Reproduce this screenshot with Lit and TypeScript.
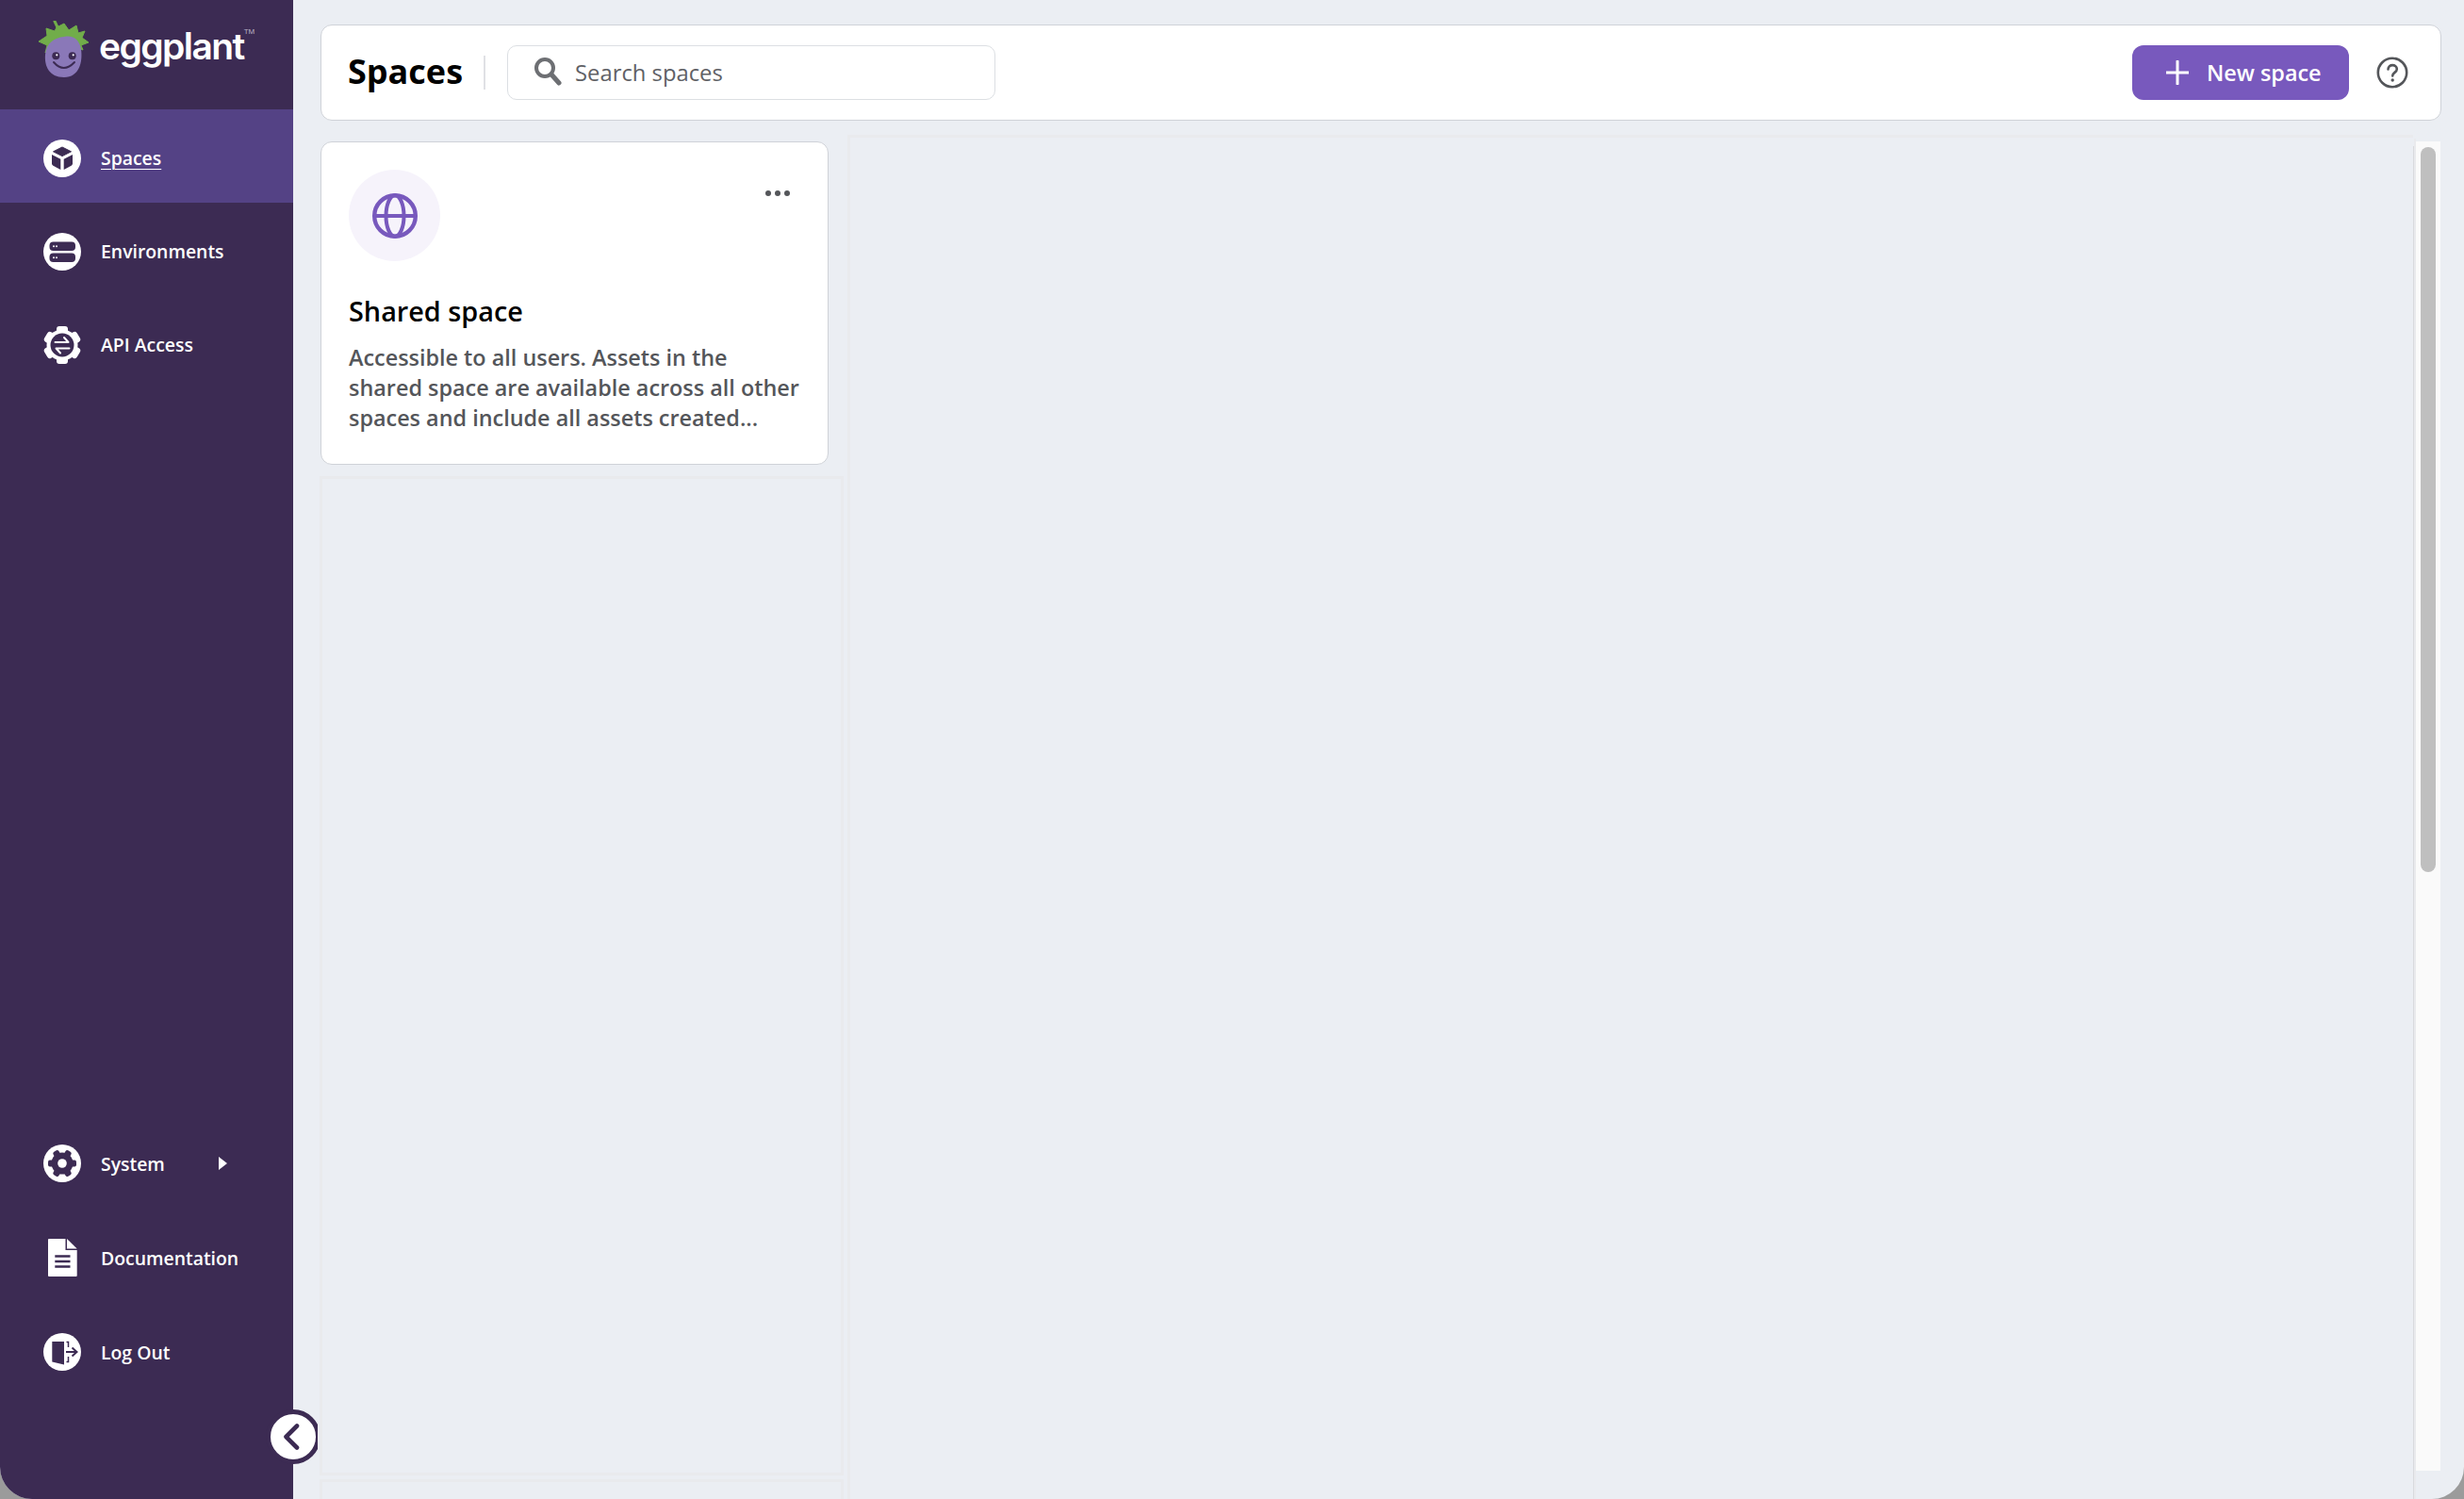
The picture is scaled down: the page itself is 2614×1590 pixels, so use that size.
import { LitElement, html, css, svg } from "lit";
import { customElement } from "lit/decorators.js";

const DARK = "#3c2b53";

const cubeIcon = svg`
  <circle cx="20" cy="20" r="20" fill="#fff" />
  <path d="M20 8 L29.5 12.8 L20 17.6 L10.5 12.8 Z" fill="${DARK}" stroke="${DARK}" stroke-width="1" stroke-linejoin="round" />
  <path d="M9 16 L18.3 20.8 V32 L10.4 27.8 Q9 27 9 25.6 Z" fill="${DARK}" />
  <path d="M31 16 L21.7 20.8 V32 L29.6 27.8 Q31 27 31 25.6 Z" fill="${DARK}" />`;

const serverIcon = svg`
  <circle cx="20" cy="20" r="20" fill="#fff" />
  <rect x="6.5" y="9.5" width="27.5" height="9.5" rx="4" fill="${DARK}" />
  <rect x="6.5" y="21.5" width="27.5" height="9.5" rx="4" fill="${DARK}" />
  <circle cx="11" cy="14.2" r="1" fill="#fff" /><circle cx="14" cy="14.2" r="1" fill="#fff" />
  <circle cx="11" cy="26.2" r="1" fill="#fff" /><circle cx="14" cy="26.2" r="1" fill="#fff" />`;

const gearTeeth = [0, 60, 120, 180, 240, 300].map(
  (a) => svg`<rect x="14" y="0" width="12" height="9" rx="3" fill="#fff" transform="rotate(${a} 20 20)" />`
);

const apiIcon = svg`
  ${gearTeeth}
  <circle cx="20" cy="20" r="16.5" fill="#fff" />
  <circle cx="20" cy="20" r="12.5" fill="${DARK}" />
  <path d="M12.5 17 H26.5 L22 12 M27.5 23.5 H13.5 L18 28.5" fill="none" stroke="#fff" stroke-width="2" stroke-linecap="round" stroke-linejoin="round" />`;

const systemIcon = svg`
  <circle cx="20" cy="20" r="20" fill="#fff" />
  <circle cx="20" cy="20" r="11.5" fill="${DARK}" />
  ${[30, 90, 150, 210, 270, 330].map(
    (a) => svg`<rect x="16.6" y="5" width="6.8" height="6" rx="2" fill="${DARK}" transform="rotate(${a} 20 20)" />`
  )}
  <circle cx="20" cy="20" r="4.8" fill="#fff" />`;

const docIcon = svg`
  <path d="M6 0 H23.5 V12 H35.7 V39 Q35.7 40 34.7 40 H6 Q5 40 5 39 V1 Q5 0 6 0 Z" fill="#fff" />
  <path d="M25 0 L35.7 10.5 H25 Z" fill="#fff" />
  <path d="M12.3 18.5 H28.5 M12.3 24 H28.5 M12.3 29.5 H28.5" stroke="${DARK}" stroke-width="2.6" />`;

const logoutIcon = svg`
  <circle cx="20" cy="20" r="20" fill="#fff" />
  <path d="M9.3 9 H22 V33.5 L9.3 30.5 Z" fill="${DARK}" />
  <path d="M24.5 9.5 H26.5 V15 M26.5 25 V30.5 H24.5" fill="none" stroke="${DARK}" stroke-width="1.5" />
  <path d="M24 20 H35 M30.5 15.5 L35.5 20 L30.5 24.5" fill="none" stroke="${DARK}" stroke-width="2" />`;

const navTop = [
  { label: "Spaces", icon: cubeIcon, active: true },
  { label: "Environments", icon: serverIcon },
  { label: "API Access", icon: apiIcon },
];

const navBottom = [
  { label: "System", icon: systemIcon, caret: true },
  { label: "Documentation", icon: docIcon },
  { label: "Log Out", icon: logoutIcon },
];

@customElement("app-root")
export class AppRoot extends LitElement {
  static styles = css`
    :host {
      display: block;
      height: 1590px;
      background: #9b9b9b;
      font-family: "Open Sans", "Noto Sans", sans-serif;
    }
    .app {
      display: flex;
      height: 1590px;
      overflow: hidden;
      background: #ebeef3;
      border-radius: 0 0 34px 34px;
    }
    .sidebar {
      position: relative;
      flex: 0 0 311px;
      display: flex;
      flex-direction: column;
      background: #3c2b53;
      z-index: 1;
    }
    .brand {
      height: 116px;
      box-sizing: border-box;
      padding: 22px 0 0 39px;
      display: flex;
      align-items: flex-start;
      gap: 8px;
    }
    .brand svg {
      width: 58px;
      height: 62px;
      flex: none;
    }
    .wordmark {
      font-family: "Inter", sans-serif;
      font-size: 39px;
      line-height: 46px;
      font-weight: 600;
      letter-spacing: -1.6px;
      color: #fff;
      margin-top: 4px;
    }
    .tm {
      font-family: "Liberation Sans", sans-serif;
      font-size: 8px;
      line-height: 8px;
      color: #b9b2c4;
      margin: 8px 0 0 -8px;
    }
    .nav-group {
      display: flex;
      flex-direction: column;
    }
    .spacer {
      flex: 1;
    }
    .nav-bottom {
      padding-bottom: 108px;
    }
    .nav-bottom .nav-item {
      height: 100px;
    }
    .nav-item {
      height: 99px;
      box-sizing: border-box;
      padding: 4px 0 0 46px;
      display: flex;
      align-items: center;
      gap: 21px;
      color: #fff;
      font-size: 19.4px;
      font-weight: 600;
    }
    .nav-item.active {
      background: #544285;
    }
    .nav-item.active .label {
      text-decoration: underline;
      text-underline-offset: 4px;
      text-decoration-thickness: 1px;
    }
    .nav-item svg {
      width: 40px;
      height: 40px;
      flex: none;
    }
    .caret {
      width: 0;
      height: 0;
      margin-left: 36px;
      border-left: 9px solid #fff;
      border-top: 7px solid transparent;
      border-bottom: 7px solid transparent;
    }
    .toggle {
      position: absolute;
      right: -29px;
      bottom: 37px;
      width: 58px;
      height: 58px;
      box-sizing: border-box;
      border: 5px solid #3c2b53;
      border-radius: 50%;
      background: #fff;
      display: flex;
      align-items: center;
      justify-content: center;
      clip-path: inset(0 3px 0 0);
    }
    .toggle svg {
      width: 24px;
      height: 30px;
    }
    .main {
      flex: 1;
      min-width: 0;
      display: flex;
      flex-direction: column;
      padding: 26px 24px 0 29px;
    }
    .topbar {
      flex: none;
      height: 102px;
      box-sizing: border-box;
      display: flex;
      align-items: center;
      padding: 0 34px 0 28px;
      background: #fff;
      border: 1.5px solid #cfd2d8;
      border-radius: 12px;
    }
    .title {
      margin: 0;
      font-size: 36px;
      font-weight: 700;
      color: #000;
      line-height: 48px;
      padding-bottom: 2px;
    }
    .divider {
      width: 2px;
      height: 36px;
      margin: 0 23px 0 22px;
      background: #e0e1e5;
    }
    .search {
      width: 518px;
      height: 58px;
      box-sizing: border-box;
      display: flex;
      align-items: center;
      gap: 14px;
      padding: 0 0 0 27px;
      border: 1.5px solid #dcdfe3;
      border-radius: 10px;
      color: #5f6166;
      font-size: 23.8px;
    }
    .search svg {
      width: 30px;
      height: 31px;
      flex: none;
      margin-top: -4px;
    }
    .topbar-right {
      margin-left: auto;
      display: flex;
      align-items: center;
      gap: 29px;
    }
    .new-btn {
      width: 230px;
      height: 58px;
      display: flex;
      align-items: center;
      gap: 19px;
      padding: 0 0 0 36px;
      box-sizing: border-box;
      border: none;
      border-radius: 12px;
      background: #7859bd;
      color: #fff;
      font-family: inherit;
      font-size: 23.4px;
      font-weight: 600;
    }
    .new-btn svg {
      width: 24px;
      height: 26px;
      flex: none;
    }
    .help {
      width: 34px;
      height: 34px;
      flex: none;
    }
    .content {
      flex: 1;
      min-height: 0;
      display: flex;
      margin: 15px 1px 0 -2px;
    }
    .left-col {
      flex: 0 0 558px;
      display: flex;
      flex-direction: column;
      padding-top: 7px;
      margin-right: 3px;
      box-sizing: border-box;
    }
    .card {
      flex: none;
      width: 539px;
      height: 343px;
      margin-left: 2px;
      box-sizing: border-box;
      padding: 29px 8px 0 29px;
      background: #fff;
      border: 1.5px solid #cfd2d8;
      border-radius: 12px;
      position: relative;
    }
    .card-icon {
      width: 97px;
      height: 97px;
      border-radius: 50%;
      background: #f6f3fb;
      display: flex;
      align-items: center;
      justify-content: center;
    }
    .card-icon svg {
      width: 50px;
      height: 50px;
    }
    .dots {
      position: absolute;
      top: 51px;
      right: 40px;
      display: flex;
      gap: 4px;
    }
    .dots span {
      width: 6px;
      height: 6px;
      border-radius: 50%;
      background: #54565a;
    }
    .card-title {
      margin: 32px 0 0;
      font-size: 28.8px;
      line-height: 42px;
      font-weight: 600;
      color: #000;
    }
    .card-text {
      margin: 12px 0 0;
      width: 481px;
      font-size: 23.4px;
      line-height: 32px;
      font-weight: 600;
      color: #54565a;
    }
    .ghost {
      flex: none;
      box-sizing: border-box;
      width: 556px;
      height: 1060px;
      margin: 12px 0 4px 1px;
      border: 3px solid #e9eaed;
    }
    .ghost.next {
      margin-top: 0;
    }
    .panel {
      flex: 1;
      min-width: 0;
      box-sizing: border-box;
      height: 1500px;
      border: 3px solid #e9eaed;
      border-right: 0;
    }
    .rule {
      flex: none;
      width: 1px;
      margin-top: 12px;
      background: #d9dade;
    }
    .rule-gap {
      flex: none;
      width: 2px;
      background: #e9eaed;
      margin-top: 4px;
    }
    .track {
      flex: none;
      width: 26px;
      height: 1410px;
      margin-top: 7px;
      padding: 6px 5px 0;
      box-sizing: border-box;
      background: #fafafa;
    }
    .thumb {
      width: 16px;
      height: 769px;
      border-radius: 8px;
      background: #bfbfbf;
    }
  `;

  private navRow(item: { label: string; icon: unknown; active?: boolean; caret?: boolean }) {
    return html`
      <div class="nav-item ${item.active ? "active" : ""}">
        <svg viewBox="0 0 40 40">${item.icon}</svg>
        <span class="label">${item.label}</span>
        ${item.caret ? html`<span class="caret"></span>` : ""}
      </div>
    `;
  }

  render() {
    return html`
      <div class="app">
        <aside class="sidebar">
          <div class="brand">
            <svg viewBox="0 0 56 62">
              <path d="M1 22 L10 16 L9 8 L18 11 L20 7 L28 3 L33 10 L41 5 L43 13 L50 11 L47 18 L54 23 L46 26 L48 31 L41 28 L15 28 L8 34 L10 26 Z" fill="#71ad4a" stroke="#71ad4a" stroke-width="1" stroke-linejoin="round" />
              <path d="M18 0.5 L21.5 8" stroke="#71ad4a" stroke-width="3" stroke-linecap="round" />
              <path d="M28 17 C38 15 44 20 46 30 C48 44 44 60 28 60 C12 60 7 48 8 36 C9 24 17 18 28 17 Z" fill="#8a78b8" />
              <circle cx="19.3" cy="37.3" r="4" fill="${DARK}" /><circle cx="36.7" cy="37.3" r="4" fill="${DARK}" />
              <circle cx="20.3" cy="36.3" r="1.1" fill="#fff" /><circle cx="37.7" cy="36.3" r="1.1" fill="#fff" />
              <path d="M17 44 Q27.5 56 39 44" fill="none" stroke="${DARK}" stroke-width="2" stroke-linecap="round" />
            </svg>
            <span class="wordmark">eggplant</span>
            <span class="tm">TM</span>
          </div>
          <nav class="nav-group">${navTop.map((i) => this.navRow(i))}</nav>
          <div class="spacer"></div>
          <nav class="nav-group nav-bottom">${navBottom.map((i) => this.navRow(i))}</nav>
          <div class="toggle">
            <svg viewBox="0 0 24 30">
              <path d="M16 3.5 L4.5 15 L16 26.5" fill="none" stroke="${DARK}" stroke-width="4.6" stroke-linecap="round" stroke-linejoin="round" />
            </svg>
          </div>
        </aside>
        <main class="main">
          <header class="topbar">
            <h1 class="title">Spaces</h1>
            <div class="divider"></div>
            <div class="search">
              <svg viewBox="0 0 30 31">
                <circle cx="12" cy="12" r="9" fill="none" stroke="#6d6f73" stroke-width="4" />
                <path d="M19 19 L27 28" stroke="#6d6f73" stroke-width="5" stroke-linecap="round" />
              </svg>
              <span>Search spaces</span>
            </div>
            <div class="topbar-right">
              <button class="new-btn">
                <svg viewBox="0 0 24 26">
                  <path d="M12 1 V25 M0 13 H24" stroke="#fff" stroke-width="3" stroke-linecap="round" />
                </svg>
                New space
              </button>
              <svg class="help" viewBox="0 0 34 34">
                <circle cx="17" cy="17" r="15.2" fill="none" stroke="#54565a" stroke-width="2.6" />
                <path d="M12.5 13.5 C12.5 7.5 21.8 7.8 21.8 13.3 C21.8 17 17.2 16.8 17.2 20.5" fill="none" stroke="#54565a" stroke-width="2.6" stroke-linecap="round" />
                <circle cx="17.2" cy="25" r="1.7" fill="#54565a" />
              </svg>
            </div>
          </header>
          <div class="content">
            <div class="left-col">
              <article class="card">
                <div class="card-icon">
                  <svg viewBox="0 0 50 50">
                    <circle cx="25" cy="25" r="21.8" fill="none" stroke="#7859bd" stroke-width="4.4" />
                    <ellipse cx="25" cy="25" rx="9.5" ry="21.8" fill="none" stroke="#7859bd" stroke-width="4" />
                    <path d="M3 25 H47" stroke="#7859bd" stroke-width="4" />
                  </svg>
                </div>
                <div class="dots"><span></span><span></span><span></span></div>
                <h2 class="card-title">Shared space</h2>
                <p class="card-text">Accessible to all users. Assets in the shared space are available across all other spaces and include all assets created...</p>
              </article>
              <div class="ghost"></div>
              <div class="ghost next"></div>
            </div>
            <div class="panel"></div>
            <div class="rule"></div>
            <div class="rule-gap"></div>
            <div class="track"><div class="thumb"></div></div>
          </div>
        </main>
      </div>
    `;
  }
}
